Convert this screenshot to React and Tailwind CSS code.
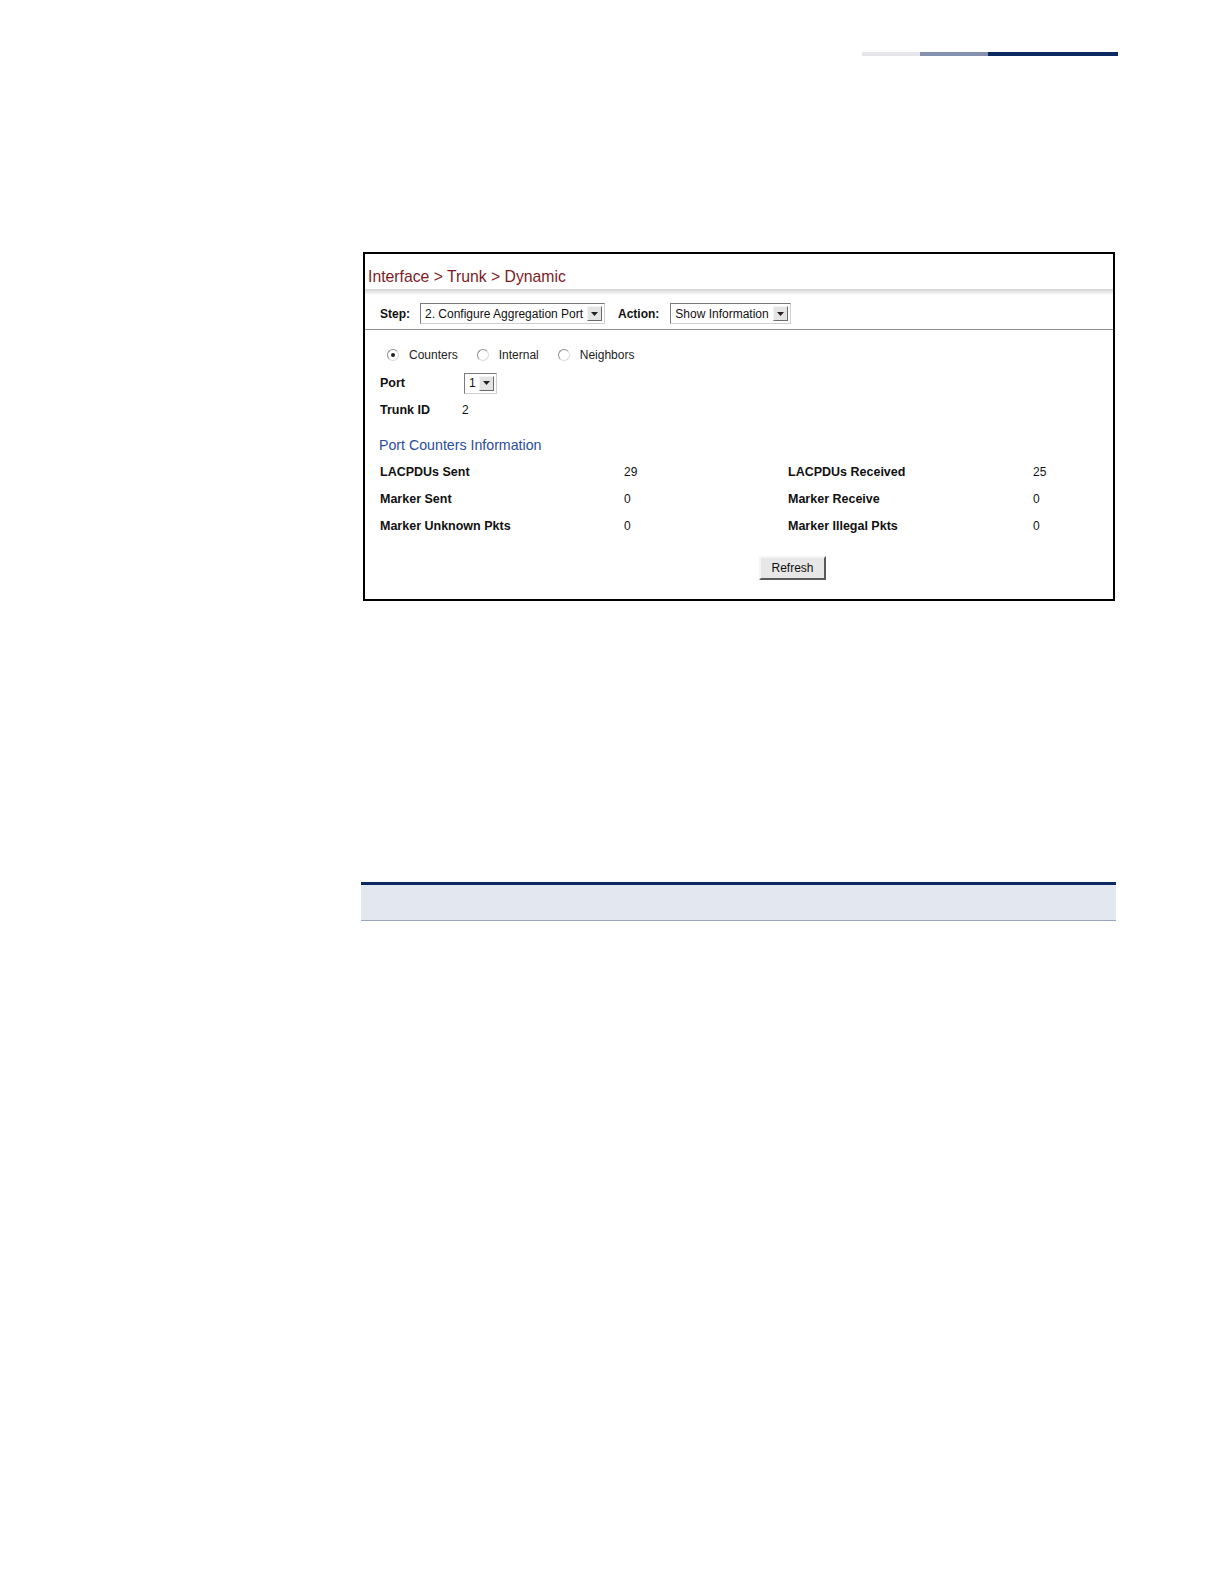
import React from "react";

const font = { fontFamily: '"Liberation Sans", Arial, sans-serif' };

const Arrow = () => (
  <div className="w-[15px] h-[15px] bg-[#e4e4e4] border border-t-[#f4f4f4] border-l-[#f4f4f4] border-b-[#6b6b6b] border-r-[#6b6b6b] flex items-center justify-center">
    <svg width="7" height="4" viewBox="0 0 7 4">
      <path d="M0 0 H7 L3.5 4 Z" fill="#222" />
    </svg>
  </div>
);

const Select = ({ value, width }) => (
  <div
    className={`h-[21px] ${width} bg-white border border-t-[#7a7a7a] border-l-[#7a7a7a] border-b-[#cfcfcf] border-r-[#cfcfcf] flex items-center justify-between pl-[4px] pr-[2px]`}
  >
    <span className="text-[12px] text-[#111] leading-none whitespace-nowrap">{value}</span>
    <Arrow />
  </div>
);

const Radio = ({ checked, label }) => (
  <div className="flex items-center">
    <div className="w-[12px] h-[12px] rounded-full border border-[#8d8d8d] border-b-[#dcdcdc] border-r-[#dcdcdc] bg-white flex items-center justify-center">
      {checked && <div className="w-[4px] h-[4px] rounded-full bg-[#222]" />}
    </div>
    <span className="ml-[10px] text-[12px] text-[#222]">{label}</span>
  </div>
);

const rows = [
  ["LACPDUs Sent", "29", "LACPDUs Received", "25"],
  ["Marker Sent", "0", "Marker Receive", "0"],
  ["Marker Unknown Pkts", "0", "Marker Illegal Pkts", "0"],
];

export default function App() {
  return (
    <div className="w-screen h-screen bg-white overflow-hidden" style={font}>
      {/* header strip */}
      <div className="flex justify-end pr-[106px] pt-[52px]">
        <div className="w-[58px] h-[4px] bg-[#e6e6ea]" />
        <div className="w-[68px] h-[4px] bg-[#8590ae]" />
        <div className="w-[130px] h-[4px] bg-[#0c2a62]" />
      </div>

      {/* screenshot frame */}
      <div className="ml-[363px] mt-[196px] w-[752px] h-[349px] border-2 border-black flex flex-col">
        <div className="pt-[11px] pl-[3px] h-[35px]">
          <span className="text-[15.75px] leading-[20px] text-[#7d1b1f]">Interface &gt; Trunk &gt; Dynamic</span>
        </div>
        <div className="h-[6px] bg-gradient-to-b from-[#d2d2d2] to-white" />
        <div className="h-[34px] pt-[3px] flex items-center pl-[15px]">
          <span className="text-[12px] font-bold text-[#111]">Step:</span>
          <div className="ml-[10px]">
            <Select value="2. Configure Aggregation Port" width="w-[185px]" />
          </div>
          <span className="ml-[13px] text-[12px] font-bold text-[#111]">Action:</span>
          <div className="ml-[11px]">
            <Select value="Show Information" width="w-[121px]" />
          </div>
        </div>
        <div className="h-px bg-[#8f8f8f]" />

        <div className="mt-[15px] h-[20px] flex items-center pl-[22px] gap-[19px]">
          <Radio checked label="Counters" />
          <Radio label="Internal" />
          <Radio label="Neighbors" />
        </div>

        <div className="mt-[8px] h-[20px] flex items-center pl-[15px]">
          <span className="w-[84px] text-[12.5px] font-bold text-[#111]">Port</span>
          <Select value="1" width="w-[33px]" />
        </div>

        <div className="mt-[7px] h-[20px] flex items-center pl-[15px]">
          <span className="w-[82px] text-[12.5px] font-bold text-[#111]">Trunk ID</span>
          <span className="text-[12px] text-[#111]">2</span>
        </div>

        <div className="mt-[16px] h-[20px] flex items-center pl-[14px]">
          <span className="text-[14.2px] text-[#2a4d9c]">Port Counters Information</span>
        </div>

        <div className="mt-[6px] flex flex-col gap-[7px]">
          {rows.map((r) => (
            <div key={r[0]} className="h-[20px] flex items-center pl-[15px] text-[12px] text-[#111]">
              <span className="w-[244px] text-[12.5px] font-bold">{r[0]}</span>
              <span className="w-[164px]">{r[1]}</span>
              <span className="w-[245px] text-[12.5px] font-bold">{r[2]}</span>
              <span>{r[3]}</span>
            </div>
          ))}
        </div>

        <div className="mt-[20px] pl-[394px]">
          <button className="w-[67px] h-[24px] bg-[#e7e7e7] border-2 border-t-[#f5f5f5] border-l-[#f5f5f5] border-b-[#5a5a5a] border-r-[#5a5a5a] text-[12px] text-[#111] flex items-center justify-center">
            Refresh
          </button>
        </div>
      </div>

      {/* table header band */}
      <div className="ml-[361px] mt-[281px] w-[755px]">
        <div className="h-[3px] bg-[#0c2a62]" />
        <div className="h-[35px] bg-[#e3e8f0]" />
        <div className="h-px bg-[#9aa6bd]" />
      </div>
    </div>
  );
}
